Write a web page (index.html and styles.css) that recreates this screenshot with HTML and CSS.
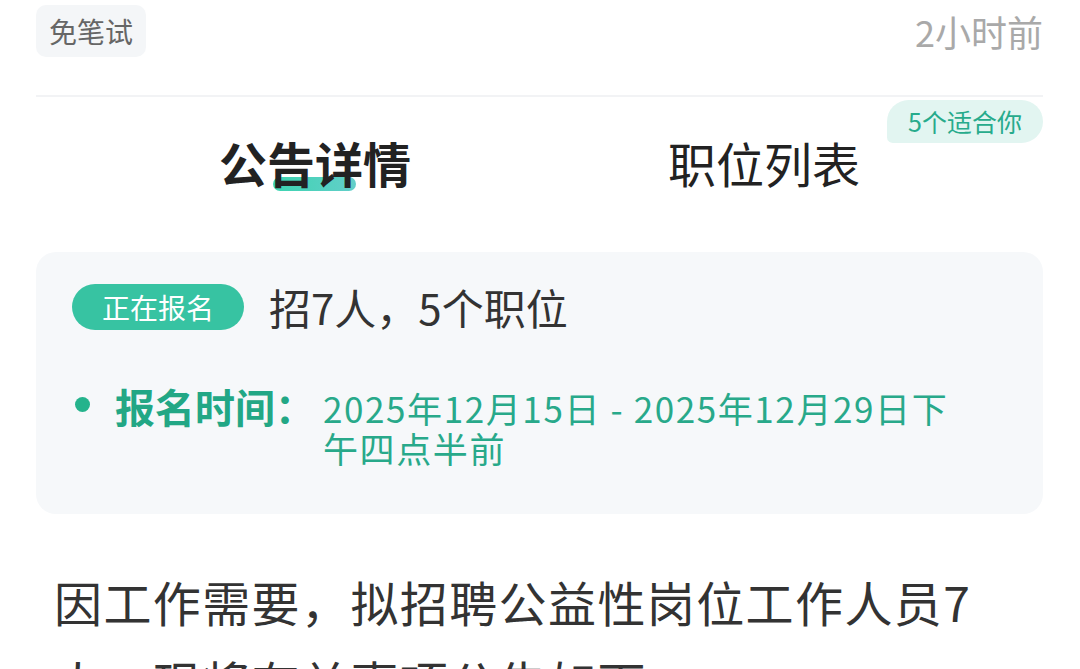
FILE: index.html
```html
<!DOCTYPE html>
<html lang="zh-CN">
<head>
    <meta charset="UTF-8">
    <meta name="viewport" content="width=device-width, initial-scale=1.0">
    <title>公告详情</title>
    <link rel="stylesheet" href="styles.css">
</head>
<body>
    <div class="page">
        <div class="meta-row">
            <span class="tag">免笔试</span>
            <span class="time">2小时前</span>
        </div>

        <div class="tabs">
            <div class="tab active">公告详情<span class="tab-bar"></span></div>
            <div class="tab">职位列表</div>
            <span class="match-badge">5个适合你</span>
        </div>

        <div class="summary-card">
            <div class="summary-head">
                <span class="status-pill">正在报名</span>
                <span class="summary-count">招7人，5个职位</span>
            </div>
            <div class="signup-row">
                <span class="dot"></span>
                <span class="signup-label">报名时间：</span>
                <span class="signup-date">2025年12月15日 - 2025年12月29日下午四点半前</span>
            </div>
        </div>

        <p class="body-text">因工作需要，拟招聘公益性岗位工作人员7人，现将有关事项公告如下：</p>
    </div>
</body>
</html>
```

FILE: styles.css
```css
body {
    margin: 0;
    background-color: #fff;
    font-family: "Noto Sans CJK SC", "Noto Sans", sans-serif;
    color: #333;
}
.page {
    padding: 0 37px 0 36px;
}
.meta-row {
    display: flex;
    justify-content: space-between;
    align-items: center;
    padding: 5px 0 38px 0;
    border-bottom: 2px solid #f2f3f5;
}
.tag {
    background-color: #f4f6f8;
    color: #666;
    font-size: 28px;
    line-height: 52px;
    padding: 0 13px;
    border-radius: 10px;
}
.time {
    color: #a9a9a9;
    font-size: 36px;
    line-height: 52px;
}
.tabs {
    position: relative;
    display: flex;
    justify-content: center;
    padding: 25px 0 50px 0;
}
.tab {
    position: relative;
    width: 449px;
    text-align: center;
    font-size: 48px;
    line-height: 80px;
    color: #222;
}
.tab.active {
    font-weight: bold;
}
.tab-bar {
    position: absolute;
    left: 50%;
    bottom: 11px;
    width: 83px;
    height: 14px;
    margin-left: -42px;
    border-radius: 7px;
    background: linear-gradient(90deg, #27cfa8, #52c9c4);
    opacity: 0.9;
    z-index: -1;
}
.match-badge {
    position: absolute;
    right: 0;
    top: 3px;
    background-color: #e2f5f1;
    color: #27ab8c;
    font-size: 25px;
    line-height: 43px;
    padding: 0 21px;
    border-radius: 22px 22px 22px 6px;
}
.summary-card {
    background-color: #f6f8fa;
    border-radius: 20px;
    padding: 32px 60px 46px 36px;
}
.summary-head {
    display: flex;
    align-items: center;
    gap: 25px;
}
.status-pill {
    background-color: #37c3a2;
    color: #fff;
    font-size: 28px;
    line-height: 46px;
    padding: 0 30px;
    border-radius: 23px;
}
.summary-count {
    font-size: 42px;
    line-height: 46px;
    color: #333;
}
.signup-row {
    display: flex;
    align-items: baseline;
    margin-top: 55px;
}
.dot {
    flex: none;
    align-self: flex-start;
    width: 15px;
    height: 15px;
    border-radius: 50%;
    background-color: #25b38c;
    margin: 12px 0 0 3px;
}
.signup-label {
    flex: none;
    font-size: 40px;
    font-weight: bold;
    line-height: 42px;
    color: #22a785;
    margin-left: 25px;
}
.signup-date {
    font-size: 35px;
    line-height: 40px;
    letter-spacing: 1.6px;
    color: #28a98a;
    margin-left: 8px;
}
.body-text {
    margin: 47px 50px 0 18px;
    font-size: 48px;
    line-height: 80px;
    letter-spacing: 1.4px;
    color: #333;
}
```
